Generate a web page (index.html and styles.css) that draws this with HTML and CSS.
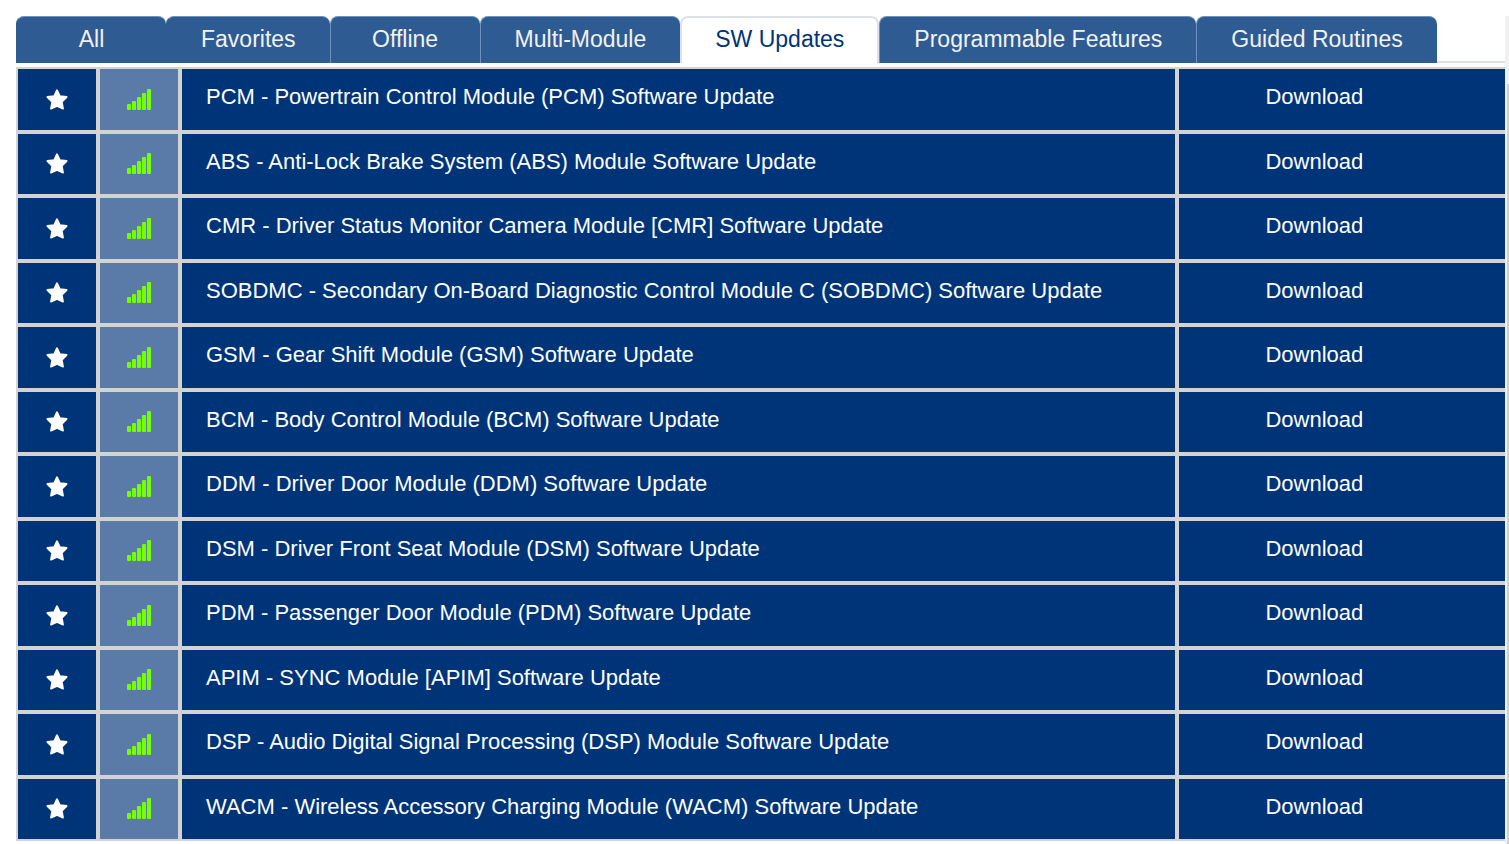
FILE: index.html
```html
<!DOCTYPE html>
<html lang="en">
<head>
<meta charset="utf-8">
<title>SW Updates</title>
<link rel="stylesheet" href="styles.css">
</head>
<body>
<svg class="defs" aria-hidden="true">
  <symbol id="star" viewBox="0 0 22 21">
    <path d="M11 1.2 13.8 7.1 20.6 8 15.8 12.8 17 19.6 11 16.9 5 19.6 6.2 12.8 1.4 8 8.2 7.1Z" fill="currentColor" stroke="currentColor" stroke-width="1.8" stroke-linejoin="round"/>
  </symbol>
  <symbol id="signal" viewBox="0 0 24 21">
    <g fill="currentColor">
      <rect x="0" y="15" width="4" height="6" rx="1"/>
      <rect x="5" y="12" width="4" height="9" rx="1"/>
      <rect x="10" y="8" width="4" height="13" rx="1"/>
      <rect x="15" y="4" width="4" height="17" rx="1"/>
      <rect x="20" y="0" width="4" height="21" rx="1"/>
    </g>
  </symbol>
</svg>
<div class="page">
  <main class="content">
    <div class="tabs" role="tablist">
      <button class="tab" role="tab">All</button>
      <button class="tab" role="tab">Favorites</button>
      <button class="tab" role="tab">Offline</button>
      <button class="tab" role="tab">Multi-Module</button>
      <button class="tab tab-active" role="tab" aria-selected="true">SW Updates</button>
      <button class="tab" role="tab">Programmable Features</button>
      <button class="tab" role="tab">Guided Routines</button>
    </div>
    <table class="updates">
      <colgroup><col class="col-icon"><col class="col-icon"><col><col class="col-action"></colgroup>
      <tbody id="rows"></tbody>
    </table>
  </main>
  <div class="scrollbar" aria-hidden="true"><div class="thumb"></div></div>
</div>
<script src="rows.js"></script>
</body>
</html>
```

FILE: styles.css
```css
* {
  box-sizing: border-box;
}

body {
  margin: 0;
  background: #fff;
  font-family: "Liberation Sans", Arial, sans-serif;
}

button {
  margin: 0;
  border: 0;
  background: none;
  color: inherit;
  font: inherit;
  cursor: pointer;
}

.defs {
  position: absolute;
  width: 0;
  height: 0;
}

.page {
  display: flex;
  min-height: 100vh;
  padding-top: 16px;
  padding-left: 16px;
}

.content {
  flex: 1;
  min-width: 0;
  display: flex;
  flex-direction: column;
  gap: 4px;
  padding-bottom: 3px;
}

.tabs {
  display: flex;
  height: 47px;
  box-shadow: inset 0 -2px #dee2e8;
}

.tab {
  min-width: 150px;
  padding: 0 34px 2px;
  border: 1px solid #6f92bd;
  border-width: 1px 0 0 1px;
  border-radius: 8px 8px 0 0;
  background: #2f5b93;
  color: #f2f2f2;
  font-size: 23px;
  line-height: 42px;
  white-space: nowrap;
}

.tab:first-child {
  border-left-color: #2f5b93;
}

.tab:nth-child(2) {
  border-left-color: #2f5b93;
}

.tab-active {
  border: 2px solid #dee2e8;
  border-bottom: 0;
  padding: 0 33px 4px;
  background: #fff;
  color: #003478;
  line-height: 40px;
}

.updates {
  width: 100%;
  flex: 1;
  height: calc(100vh - 70px);
  table-layout: fixed;
  border-collapse: separate;
  border-spacing: 0;
  color: #fff;
  font-size: 22px;
  line-height: 24px;
}

.col-icon {
  width: 82px;
}

.col-action {
  width: 22%;
}

.updates td {
  padding: 0;
  border: 2px solid #d3d3d3;
  background: #003478;
}

.updates td:last-child {
  border-right: 0;
}

.updates .name {
  padding: 0 24px 4px;
}

.updates .signal {
  background: #5a7ba8;
  color: #76ff03;
  text-align: center;
}

.favorite,
.download {
  display: block;
  width: 100%;
}

.favorite {
  padding: 0;
}

.download {
  padding: 0 86px 4px;
  text-align: left;
}

.icon {
  display: block;
  width: 24px;
  height: 21px;
  margin: 0 auto;
}

.icon-star {
  width: 22px;
}

.scrollbar {
  width: 4px;
  padding: 68px 0 0 2px;
  background: #f1f1f1;
  display: flex;
}

.thumb {
  flex: 1;
  background: #d0d0d0;
}
```

FILE: rows.js
```js
const modules = [
  "PCM - Powertrain Control Module (PCM) Software Update",
  "ABS - Anti-Lock Brake System (ABS) Module Software Update",
  "CMR - Driver Status Monitor Camera Module [CMR] Software Update",
  "SOBDMC - Secondary On-Board Diagnostic Control Module C (SOBDMC) Software Update",
  "GSM - Gear Shift Module (GSM) Software Update",
  "BCM - Body Control Module (BCM) Software Update",
  "DDM - Driver Door Module (DDM) Software Update",
  "DSM - Driver Front Seat Module (DSM) Software Update",
  "PDM - Passenger Door Module (PDM) Software Update",
  "APIM - SYNC Module [APIM] Software Update",
  "DSP - Audio Digital Signal Processing (DSP) Module Software Update",
  "WACM - Wireless Accessory Charging Module (WACM) Software Update"
];

document.getElementById("rows").innerHTML = modules.map(name => `
  <tr>
    <td><button class="favorite" aria-label="Favorite"><svg class="icon icon-star"><use href="#star"/></svg></button></td>
    <td class="signal"><svg class="icon"><use href="#signal"/></svg></td>
    <td class="name">${name}</td>
    <td><button class="download">Download</button></td>
  </tr>`).join("");
```
